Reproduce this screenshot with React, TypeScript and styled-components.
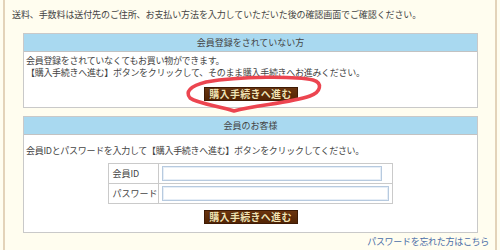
import React from "react";
import styled, { createGlobalStyle } from "styled-components";

const Global = createGlobalStyle`
  html, body { margin: 0; padding: 0; background: #FFFDEF; }
  body { font-family: "Noto Sans CJK JP", "Noto Sans", sans-serif; }
`;

const Page = styled.div`
  position: relative;
  width: 500px;
  height: 250px;
  background: #FFFDEF;
  overflow: hidden;
`;

const Frame = styled.div`
  margin-left: 3px;
  width: 494px;
  height: 250px;
  border-left: 2px solid #E3D3B9;
  border-right: 2px solid #E3D3B9;
  padding: 8px 0 0 7px;
  box-sizing: border-box;
  color: #444;
  font-size: 9px;
  line-height: 14px;
`;

const Intro = styled.p`
  margin: 0;
  height: 14px;
  letter-spacing: -0.1px;
`;

const Box = styled.section<{ $top: number }>`
  margin: ${(p) => p.$top}px 0 0 11px;
  width: 455px;
  box-sizing: border-box;
  border: 1px solid #C9C9C9;
  background: #FFFFFF;
`;

const BoxHeader = styled.h2`
  margin: 0;
  height: 17px;
  line-height: 17px;
  background: #A9D9F0;
  border-bottom: 1px solid #C2C2C2;
  text-align: center;
  font-size: 9px;
  font-weight: normal;
  color: #444;
`;

const BoxBody = styled.div<{ $pt: number; $pb: number }>`
  padding: ${(p) => p.$pt}px 2px ${(p) => p.$pb}px 2px;
`;

const Line = styled.p`
  margin: 0;
  height: 12px;
  line-height: 12px;
  letter-spacing: -0.3px;
`;

const ButtonRow = styled.div<{ $mt: number }>`
  display: flex;
  justify-content: center;
  height: 14px;
  margin-top: ${(p) => p.$mt}px;
`;

const BrownButton = styled.button`
  display: block;
  width: 94px;
  height: 14px;
  padding: 0;
  border: 1px solid #3E1B05;
  background: linear-gradient(#6A340F, #532505);
  color: #F3E3B3;
  font-family: "Noto Sans CJK JP", sans-serif;
  font-size: 10px;
  font-weight: bold;
  line-height: 12px;
  letter-spacing: 0.3px;
  text-shadow: 0 0 1px #2a1000;
  cursor: pointer;
`;

const LoginTable = styled.table`
  margin: 6px auto 0;
  border-collapse: collapse;
  width: 281px;
`;

const LabelCell = styled.th`
  width: 43px;
  height: 19px;
  padding: 0 0 0 3px;
  border: 1px solid #CACACA;
  text-align: left;
  font-weight: normal;
  font-size: 9px;
  line-height: 12px;
  color: #444;
  white-space: nowrap;
`;

const FieldCell = styled.td`
  padding: 2px 3px;
  border: 1px solid #CACACA;
  line-height: 12px;
`;

const Field = styled.input<{ $w: number }>`
  display: block;
  width: ${(p) => p.$w}px;
  height: 15px;
  box-sizing: border-box;
  border: 1px solid #B7CADF;
  box-shadow: inset 0 0 0 1px #E6EEF7;
  background: #fff;
  padding: 0;
`;

const LinkRow = styled.div`
  display: flex;
  justify-content: flex-end;
  margin: 3px 6px 0 0;
`;

const ForgotLink = styled.a`
  color: #4A6EA8;
  text-decoration: none;
  font-size: 9px;
  letter-spacing: -0.3px;
  line-height: 12px;
`;

const Annotation = styled.svg`
  position: absolute;
  left: 0;
  top: 0;
  pointer-events: none;
`;

export default function App() {
  return (
    <Page>
      <Global />
      <Frame>
        <Intro>
          送料、手数料は送付先のご住所、お支払い方法を入力していただいた後の確認画面でご確認ください。
        </Intro>
        <Box $top={11}>
          <BoxHeader>会員登録をされていない方</BoxHeader>
          <BoxBody $pt={3} $pb={6}>
            <Line>会員登録をされていなくてもお買い物ができます。</Line>
            <Line>【購入手続きへ進む】ボタンをクリックして、そのまま購入手続きへお進みください。</Line>
            <ButtonRow $mt={8}>
              <BrownButton>購入手続きへ進む</BrownButton>
            </ButtonRow>
          </BoxBody>
        </Box>
        <Box $top={8}>
          <BoxHeader>会員のお客様</BoxHeader>
          <BoxBody $pt={10} $pb={8}>
            <Line>会員IDとパスワードを入力して【購入手続きへ進む】ボタンをクリックしてください。</Line>
            <LoginTable>
              <tbody>
                <tr>
                  <LabelCell>会員ID</LabelCell>
                  <FieldCell>
                    <Field $w={220} />
                  </FieldCell>
                </tr>
                <tr>
                  <LabelCell>パスワード</LabelCell>
                  <FieldCell>
                    <Field $w={227} type="password" />
                  </FieldCell>
                </tr>
              </tbody>
            </LoginTable>
            <ButtonRow $mt={6}>
              <BrownButton>購入手続きへ進む</BrownButton>
            </ButtonRow>
          </BoxBody>
        </Box>
        <LinkRow>
          <ForgotLink href="#">パスワードを忘れた方はこちら</ForgotLink>
        </LinkRow>
      </Frame>
      <Annotation width="500" height="250" viewBox="0 0 500 250">
        <path
          d="M206 82 C240 76 296 76 313 80 C323 83 321 92 310 96 C290 103 256 105 234 111 C220 106 198 104 190 98 C185 92 190 86 206 82"
          fill="none"
          stroke="#EC4550"
          strokeWidth="3.5"
          strokeLinejoin="round"
          strokeLinecap="round"
        />
      </Annotation>
    </Page>
  );
}
